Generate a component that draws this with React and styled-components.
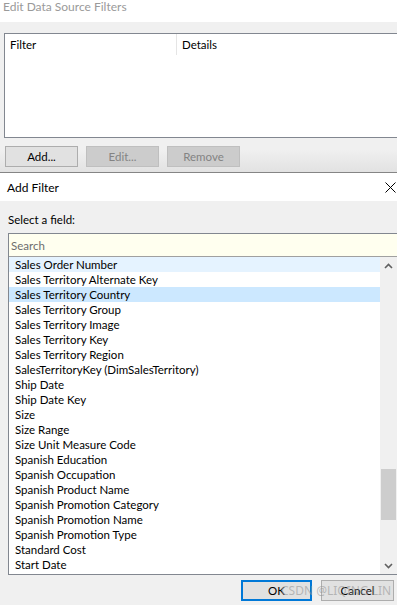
import * as React from "react"
import styled, { createGlobalStyle } from "styled-components";

const fields = [
    "Sales Order Number",
    "Sales Territory Alternate Key",
    "Sales Territory Country",
    "Sales Territory Group",
    "Sales Territory Image",
    "Sales Territory Key",
    "Sales Territory Region",
    "SalesTerritoryKey (DimSalesTerritory)",
    "Ship Date",
    "Ship Date Key",
    "Size",
    "Size Range",
    "Size Unit Measure Code",
    "Spanish Education",
    "Spanish Occupation",
    "Spanish Product Name",
    "Spanish Promotion Category",
    "Spanish Promotion Name",
    "Spanish Promotion Type",
    "Standard Cost",
    "Start Date",
    "Start Date Key",
];

const GlobalStyle = createGlobalStyle`
body {
    margin: 0;
    background: #f0f0f0;
    font-family: Lato, "Liberation Sans", sans-serif;
    font-size: 11.5px;
    color: #000;
}
`

const Chevron = ({ down }) => (
    <svg width="9" height="6" viewBox="0 0 9 6">
        <polyline
            points={down ? "1,1 4.5,4.5 8,1" : "1,5 4.5,1.5 8,5"}
            fill="none"
            stroke="#606060"
            strokeWidth="1.6"
        />
    </svg>
)

const App = () => {
    return (
        <Page>
            <GlobalStyle />
            <EditTitle>Edit Data Source Filters</EditTitle>
            <EditBody>
                <FilterTable>
                    <HeaderCell $width={172}>Filter</HeaderCell>
                    <HeaderCell>Details</HeaderCell>
                </FilterTable>
                <ButtonRow>
                    <Button>Add...</Button>
                    <Button disabled>Edit...</Button>
                    <Button disabled>Remove</Button>
                </ButtonRow>
            </EditBody>

            <AddDialog>
                <AddTitle>
                    <span>Add Filter</span>
                    <svg width="11" height="11" viewBox="0 0 11 11">
                        <path d="M0.5 0.5 L10.5 10.5 M10.5 0.5 L0.5 10.5" stroke="#000" strokeWidth="1" />
                    </svg>
                </AddTitle>
                <AddBody>
                    <Label>Select a field:</Label>
                    <FieldBox>
                        <Search placeholder="Search" />
                        <ListArea>
                            <Rows>
                                {fields.map((f, i) => (
                                    <Row key={f} $state={i === 2 ? "selected" : i === 0 ? "hover" : ""}>{f}</Row>
                                ))}
                            </Rows>
                            <Scrollbar>
                                <Arrow><Chevron /></Arrow>
                                <Track>
                                    <Thumb />
                                </Track>
                                <Arrow><Chevron down /></Arrow>
                            </Scrollbar>
                        </ListArea>
                    </FieldBox>
                    <Footer>
                        <Button $primary>OK</Button>
                        <Button>Cancel</Button>
                    </Footer>
                </AddBody>
            </AddDialog>
            <Watermark>CSDN @LIQING LIN</Watermark>
        </Page>
    )
}

const Page = styled.div`
position: relative;
width: 397px;
height: 605px;
overflow: hidden;
`

const EditTitle = styled.div`
height: 22px;
background: #fff;
color: #9a9a9a;
font-size: 12px;
line-height: 14px;
padding-left: 3px;
`

const EditBody = styled.div`
padding: 11px 0 0 4px;
height: 151px;
box-sizing: border-box;
background: linear-gradient(#f0f0f0 85%, #e2e2e2);
border-bottom: 1px solid #858585;
`

const FilterTable = styled.div`
display: flex;
align-items: flex-start;
height: 103px;
background: #fff;
border: 1px solid #828790;
border-right: none;
`

const HeaderCell = styled.div`
width: ${p => p.$width ? p.$width + "px" : "auto"};
height: 21px;
line-height: 21px;
padding-left: 5px;
box-sizing: border-box;
border-right: ${p => p.$width ? "1px solid #e5e5e5" : "none"};
`

const ButtonRow = styled.div`
display: flex;
gap: 8px;
margin-top: 8px;
padding-left: 1px;
`

const Button = styled.button`
width: ${p => p.$primary ? "71px" : "73px"};
height: 21px;
padding: 0;
font: inherit;
color: ${p => p.disabled ? "#838383" : "#000"};
background: ${p => p.disabled ? "#cccccc" : "#e1e1e1"};
border: ${p => p.$primary ? "2px solid #0078d7" : p.disabled ? "1px solid #bfbfbf" : "1px solid #adadad"};
box-sizing: border-box;
`

const AddDialog = styled.div`
display: flex;
flex-direction: column;
`

const AddTitle = styled.div`
height: 28px;
background: #fff;
display: flex;
align-items: center;
justify-content: space-between;
padding: 0 1px 0 7px;
font-size: 12px;
`

const AddBody = styled.div`
padding: 11px 0 0 8px;
`

const Label = styled.div`
height: 15px;
line-height: 15px;
margin-bottom: 6px;
`

const FieldBox = styled.div`
width: 388px;
border: 1px solid #828790;
background: #fff;
`

const Search = styled.input`
display: block;
width: 100%;
height: 23px;
box-sizing: border-box;
margin: 0;
padding: 0 0 0 2px;
border: none;
border-bottom: 1px solid #a0a0a0;
background: #ffffef;
font: inherit;
outline: none;

&::placeholder {
    color: #6d6d6d;
}
`

const ListArea = styled.div`
display: flex;
height: 317px;
`

const Rows = styled.div`
flex: 1;
overflow: hidden;
`

const Row = styled.div`
height: 15px;
line-height: 15px;
padding-left: 6px;
white-space: nowrap;
background: ${p => p.$state === "selected" ? "#cce8ff" : p.$state === "hover" ? "#e5f3ff" : "transparent"};
`

const Scrollbar = styled.div`
width: 17px;
display: flex;
flex-direction: column;
background: #f0f0f0;
`

const Arrow = styled.div`
height: 17px;
display: flex;
align-items: center;
justify-content: center;
`

const Track = styled.div`
flex: 1;
padding: 195px 1px 0;
`

const Thumb = styled.div`
height: 51px;
background: #cdcdcd;
`

const Footer = styled.div`
display: flex;
justify-content: flex-end;
gap: 9px;
margin-top: 5px;
padding-right: 3px;

button {
    height: 21px;
}
`

const Watermark = styled.div`
position: absolute;
left: 281px;
top: 582px;
font-family: "Noto Sans", sans-serif;
font-size: 12px;
color: rgba(150, 150, 150, 0.6);
pointer-events: none;
`

export default App
